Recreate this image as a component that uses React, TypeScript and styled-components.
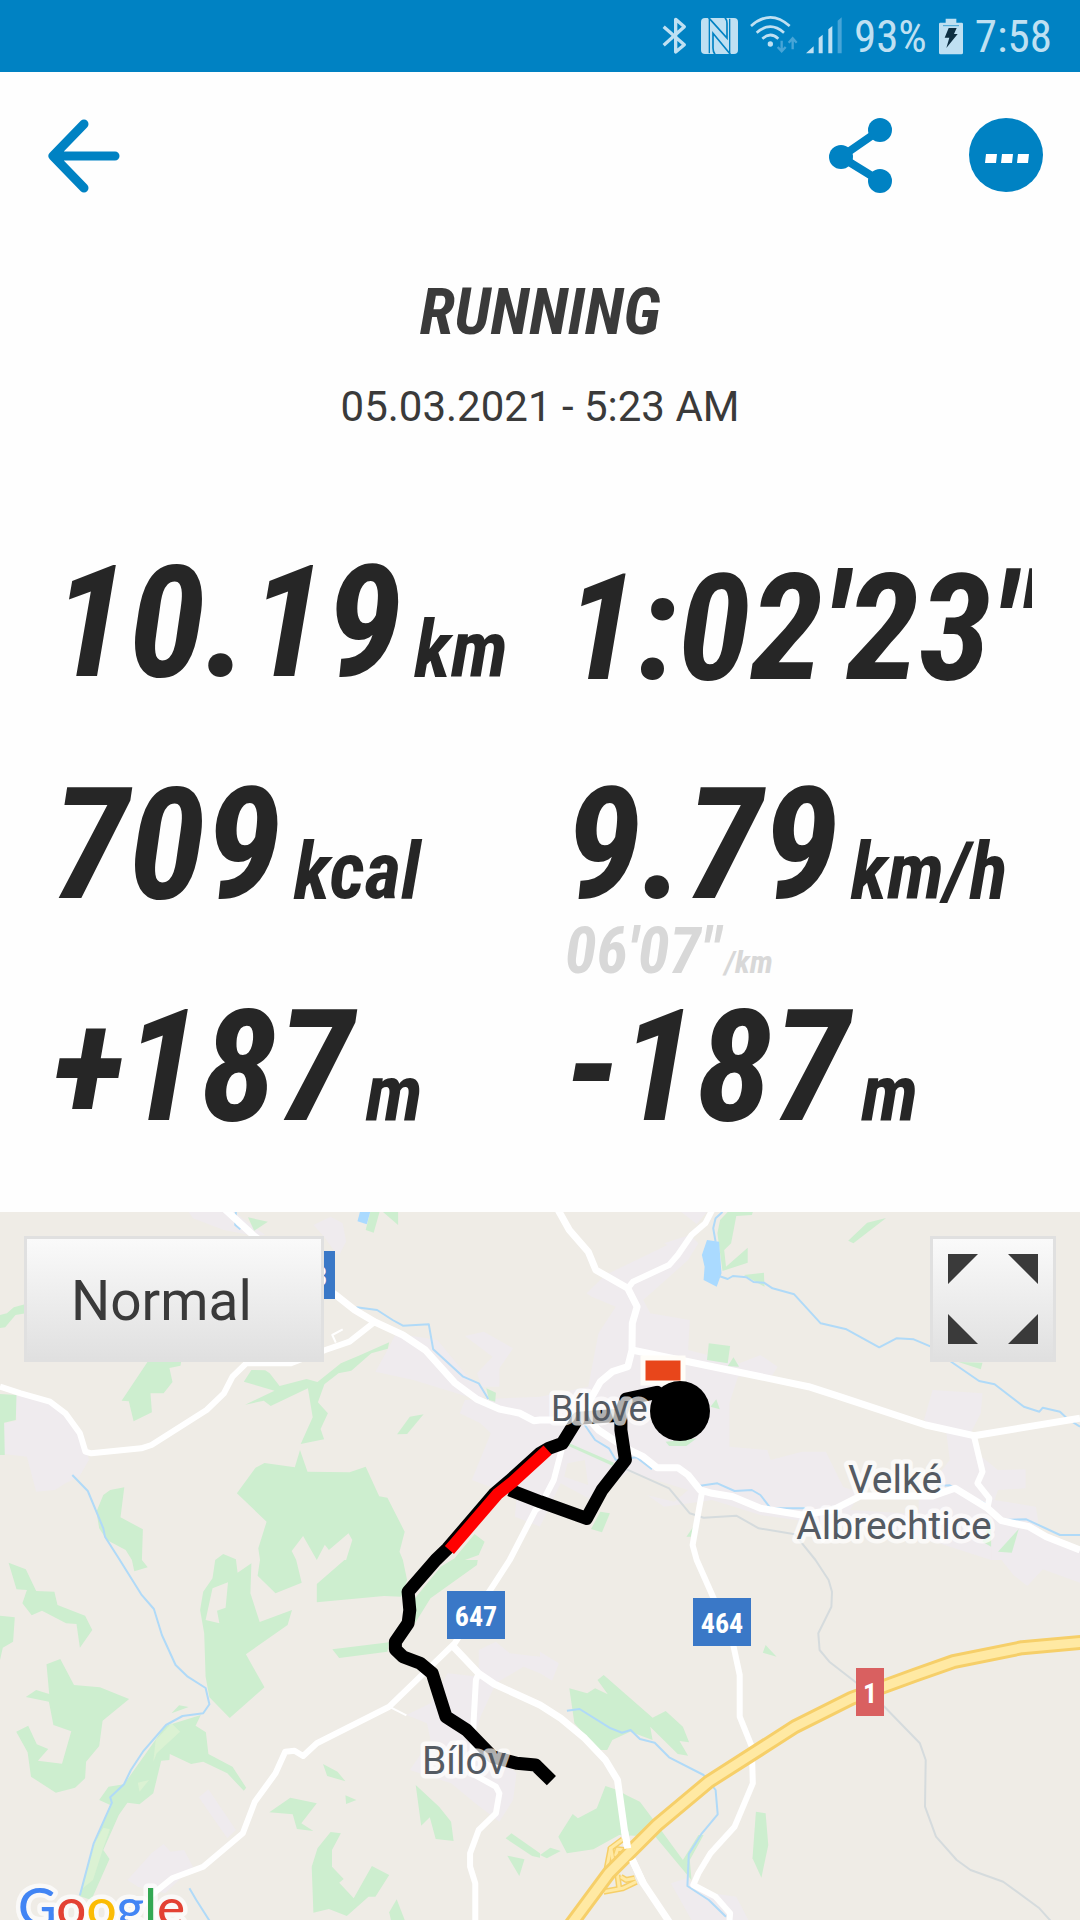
import React from "react";
import styled, { createGlobalStyle } from "styled-components";

const CONDENSED = `"Roboto Condensed", Roboto, "Liberation Sans Narrow", sans-serif`;
const REGULAR = `Roboto, "Noto Sans", sans-serif`;
const BLUE = "#0082c3";
const INK = "#262626";
const TEXT = "#3a3a3a";

const GlobalStyle = createGlobalStyle`
  *, *::before, *::after { box-sizing: border-box; }
  body { margin: 0; background: #fefefe; font-family: ${REGULAR}; color: ${TEXT}; }
`;

const Page = styled.main`
  display: flex;
  flex-direction: column;
  min-height: 100vh;
`;

const StatusBar = styled.div`
  display: flex;
  align-items: center;
  justify-content: flex-end;
  gap: 12px;
  height: 72px;
  padding: 0 28px;
  background: ${BLUE};
  color: #bfe0f2;
`;

const StatusText = styled.span`
  padding-top: 2px;
  font: 400 45px/70px ${CONDENSED};
`;

const StatusIcon = styled.svg`
  display: block;
  height: 40px;
  flex: none;
  overflow: visible;
`;

const Header = styled.header`
  display: flex;
  align-items: center;
  justify-content: space-between;
  height: 168px;
  padding: 0 36px 0 48px;
`;

const Actions = styled.div`
  display: flex;
  gap: 76px;
`;

const IconButton = styled.button`
  display: block;
  padding: 0;
  border: 0;
  background: none;
  color: ${BLUE};
  cursor: pointer;
  svg { display: block; }
`;

const Summary = styled.section`
  display: flex;
  flex-direction: column;
  align-items: center;
  gap: 28px;
  padding: 32px 48px 112px;
`;

const Title = styled.h1`
  margin: 0;
  font: italic 700 65px/80px ${CONDENSED};
`;

const When = styled.time`
  font-size: 42px;
  line-height: 54px;
`;

const Stats = styled.section`
  display: grid;
  grid-template-columns: 1fr 1fr;
  grid-auto-rows: 222px;
  column-gap: 46px;
  padding: 0 48px 0 52px;
  color: ${INK};
  font-family: ${CONDENSED};
  font-style: italic;
  font-weight: 700;
  white-space: nowrap;
`;

const Stat = styled.div<{ $clip?: boolean }>`
  min-width: 0;
  overflow: ${(p) => (p.$clip ? "hidden" : "visible")};
`;

const Value = styled.div<{ $long?: boolean }>`
  display: flex;
  align-items: baseline;
  gap: 12px;
  height: 152px;
  font-size: ${(p) => (p.$long ? 148 : 156)}px;
  line-height: ${(p) => (p.$long ? 166 : 154)}px;
`;

const Unit = styled.span`
  font-size: 79px;
  line-height: 80px;
`;

const Pace = styled.div`
  display: flex;
  align-items: baseline;
  gap: 4px;
  color: #d8d8d8;
  font-size: 64px;
  line-height: 64px;
`;

const PaceUnit = styled.span`
  font-size: 32px;
  line-height: 32px;
`;

const MapArea = styled.section`
  position: relative;
  flex: 1;
  min-height: 640px;
  overflow: hidden;
  background: #efece6;
`;

const MapCanvas = styled.svg`
  position: absolute;
  inset: 0;
  width: 100%;
  height: 100%;
`;

const MapControls = styled.div`
  position: relative;
  display: flex;
  justify-content: space-between;
  padding: 24px;
`;

const MapType = styled.select`
  appearance: none;
  width: 300px;
  height: 126px;
  padding: 4px 44px 0;
  border: 3px solid #e0e0e0;
  border-radius: 0;
  background: linear-gradient(#fafafa, #e0e0e0);
  color: ${TEXT};
  font: 400 55px/64px ${REGULAR};
`;

const Expand = styled.button`
  display: grid;
  place-items: center;
  width: 126px;
  height: 126px;
  padding: 0;
  border: 3px solid #e0e0e0;
  background: linear-gradient(#fafafa, #e0e0e0);
  color: ${TEXT};
  cursor: pointer;
`;

/* The map data comes in four tiles, each 1568 x 1080 units, covering 540 x 360 px. */
const TILES: Record<string, [number, number]> = {
  NW: [0, -12],
  NE: [540, -12],
  SW: [0, 348],
  SE: [540, 348],
};

function trace(data: string): string {
  let origin = TILES.NW;
  const points: string[] = [];
  for (const token of data.trim().split(/\s+/)) {
    if (TILES[token]) {
      origin = TILES[token];
    } else {
      const [x, y] = token.split(",").map(Number);
      points.push(`${(origin[0] + (x * 540) / 1568).toFixed(1)},${(origin[1] + y / 3).toFixed(1)}`);
    }
  }
  return points.join(" ");
}

const URBAN = [
  "NW 548,36 680,36 770,105 740,108 650,90 560,55",
  "NW 910,75 960,50 995,70 1005,125 985,165 975,160 941,110",
  "NW 45,585 130,600 200,650 240,700 258,780 230,830 190,850 160,870 105,875 78,770 12,762 12,670 48,662",
  "NW 1150,400 1270,420 1350,520 1400,565 1405,590 1390,600 1200,540 1090,515 1130,440",
  "NW 1350,408 1405,395 1490,445 1450,505 1450,560 1400,560 1385,520 1430,470",
  "NW 1350,600 1568,590 NE 140,560 170,400 220,320 150,290 135,280 190,225 370,135 360,130 435,105 460,130 430,180 300,300 320,340 435,360 430,450 580,490 640,465 690,500 675,525 575,530 550,610 550,740 660,750 670,780 760,755 830,755 880,860 930,880 900,930 1310,955 1310,1080 1100,1010 780,965 640,945 500,900 360,920 250,840 200,830 150,900 60,850 0,980 NW 1495,950 1500,890 1370,840 1425,700 1395,670 1335,640",
  "NE 410,36 485,36 455,72",
  "NE 1140,570 1285,580 1280,640 1250,700 1270,760 1330,810 1410,808 1410,865 1330,870 1320,900 1440,920 1450,990 1568,1040 1568,1080 1310,1080 1310,1040 1100,1000 1100,900 1190,780 1180,700 1115,660",
  "SW 577,712 605,688 685,810 660,835",
  "SW 370,960 440,880 475,852 495,875 535,870 560,920 480,1000 400,980",
  "SW 1180,465 1250,430 1300,340 1390,350 1390,270 1440,245 1480,280 1568,290 SE 0,275 55,310 35,362 0,340 SW 1520,320 1440,370 1395,470 1380,520 1500,640 1490,720 1450,785 1380,730 1310,670 1190,630 1250,540 1240,490",
  "SE 1340,0 1568,-10 1568,68 1460,28 1415,78 1375,45",
  "SE 380,970 425,955 450,975 500,1000 570,1010 605,1080 440,1080",
];

const CLEARINGS = [
  "NE 80,790 130,780 140,855 70,830",
  "NE 190,870 255,815 430,870 390,905 250,870",
];

const WOODS = [
  "NW 720,52 778,65 738,92",
  "NW 1075,36 1102,36 1085,98 1062,90",
  "NW 1112,36 1156,36 1156,75",
  "NW 0,345 20,340 40,322 75,312 75,340 45,345 15,382 0,384",
  "NW 432,480 526,486 524,497 492,504 501,546 475,580 437,580 441,637 388,664 374,604 353,602",
  "NW 708,545 730,510 770,511 783,520 812,558 890,537 922,546 990,490 1045,466 1130,427 1126,446 1078,460 1020,512 983,520 942,553 923,607 952,640 931,687 941,718 873,732 908,652 894,565 786,618 766,602 712,614 797,572",
  "NW 1153,703 1190,650 1230,643 1182,702",
  "NW 688,880 742,803 768,789 856,802 871,750 893,815 1015,817 1062,800 1101,889 1125,893 1175,995 1160,1055 1170,1080 SW 1182,60 1165,110 1115,108 920,127 920,72 1000,0 NW 1005,1080 1023,1020 1012,1000 955,1050 943,1034 920,1080 880,1008 847,1053 860,1080 SW 876,68 800,100 748,47 NW 755,1080 750,1045 774,965",
  "NW 300,885 320,870 361,862 350,952 415,988 412,1080 SW 429,22 390,34 NW 383,1080 365,1050 310,1020 288,985 280,935",
  "NW 1378,1002 1407,1025 1390,1065 1350,1080 SW 1387,0 1385,15 1250,115 1205,190 1205,115 1280,20 NW 1320,1075",
  "NW 0,582 48,585 46,660 12,668 14,765 0,765",
  "NW 625,1080 648,1062 685,1078 SW 690,38 730,10 727,100 754,186 848,150 835,195 714,283 768,382 667,474 608,412 597,350 593,220 581,150 590,95 617,55",
  "NW 1412,565 1440,578 1438,605 1420,600",
  "NE 523,60 545,36 618,36 615,45 570,48 555,130 535,150 540,200 603,143 603,188 530,213 515,100",
  "NE 592,225 650,218 652,260",
  "NE 895,122 950,68 1005,54 910,130",
  "NE 490,430 552,438 545,490 485,480",
  "NE 545,498 562,472 578,500",
  "NE 495,620 512,598 522,628",
  "NE 365,725 455,715 425,738 375,738",
  "NE 65,730 85,730 215,788 210,797",
  "NE 1215,486 1285,488 1280,508",
  "NE 175,935 203,940 180,997 148,987",
  "NE 425,1010 445,980 438,1010",
  "NE 1285,1025 1310,955 1310,1040",
  "NE 1330,1055 1390,987 1370,1058",
  "SW 25,8 75,28 105,93 158,95 167,135 247,167 268,210 232,263 222,192 192,190 122,152 92,166 65,130 78,90 48,88",
  "SW 0,167 43,172 38,245 8,263 0,300",
  "SW 135,313 175,297 215,375 290,382 375,417 298,482 288,558 250,605 247,655 218,683 162,698 90,650 80,577 47,515 82,497 107,553 140,567 110,602 180,611 207,514 155,495 142,425 75,411 105,390 143,402",
  "SW 498,460 520,436 548,441",
  "SW 288,720 315,680 360,673 480,498 583,465 568,497 598,517 605,582 675,620 715,683 708,692 660,640 590,605 555,612 493,582 492,600 468,602 445,700 405,733 370,728 345,765 300,870 318,897 265,1020 230,1008 275,850 320,735",
  "SW 965,268 1130,247 1125,275 985,294",
  "SW 938,612 980,635 1003,664 950,648",
  "SW 1003,706 1035,720 1005,732",
  "SW 782,757 843,713 920,730 875,790 910,813 862,807 850,763",
  "SW 1207,675 1275,740 1310,785 1317,843 1265,837 1248,772 1223,797",
  "SW 960,816 990,820 964,870 964,920 998,957 985,968 1027,1015 1080,918 1130,945 1090,1010 1070,1010 1007,1068 955,1047 910,1058 905,920 922,865",
  "SW 1130,1057 1152,1018 1175,1080 1135,1080",
  "SW 1468,835 1485,820 1568,880 1568,893 1545,888",
  "SW 1473,887 1523,898 1508,948",
  "SE 85,385 137,400 160,385 197,403 167,360 185,345 327,473 365,453 415,500 433,547 405,543 430,587 400,582 320,500 327,540 262,515 210,540 195,570 170,570 100,490",
  "SE 655,255 687,290 647,278",
  "SE 53,830 95,762 110,775 165,745 190,678 225,690 250,705 290,725 330,780 415,900 460,825 475,825 435,900 440,960 335,830 230,825 155,868 78,880",
  "SE 0,885 30,863 60,873 20,895",
  "SE 627,755 655,760 663,855 643,953 617,895",
];

const GLADES = ["SW 617,85 662,67 655,143 630,152 637,190 597,180"];

const PALE_WOODS = [
  "SW 498,490 523,515 455,580 445,605 452,540",
  "SW 300,803 319,808 298,870 270,960 240,985 275,850",
  "SW 400,668 433,660 405,695",
];

const LAKES = ["NW 1045,36 1075,36 1065,73 1038,64", "NE 485,120 520,125 527,220 513,260 475,240 478,200 470,165"];

const STREAMS = [
  "NW 685,36 683,75 698,88",
  "NW 1035,322 1095,330 1140,360 1170,377 1245,373 1258,448 1345,530 1390,550 1418,597",
  "NW 210,825 255,873 300,985 305,1010 348,1080 SW 410,103 447,147 470,225 510,315 545,350 597,384 608,433 590,460 530,468 482,495 415,575 380,630 360,673 320,712 325,728 272,850 232,1006",
  "NE 530,36 510,55 503,85 510,125",
  "NE 520,228 545,237 560,228 600,232 620,246 650,248 675,265 738,283 815,370 890,388 985,442 1035,415 1085,418 1135,440 1200,490 1275,543 1320,553 1405,620 1450,635 1460,623 1510,635 1530,655 1568,680",
  "NE 130,675 160,720 200,745 220,780 280,772 325,808",
  "NE 465,857 515,850 565,873 615,870 640,885 670,925 770,925",
  "NE 1150,858 1190,856 1300,915",
  "NE 1345,960 1412,958 1510,1005 1568,1005",
  "SW 550,985 570,1020 610,1085",
  "SE 78,452 115,447 205,505 238,518 263,510 290,537 333,548 375,592 475,645 510,690 516,763 470,820 432,882 428,978 490,1020 540,1070",
];

const RAILWAY =
  "NE 215,793 260,812 375,865 435,940 475,953 570,947 635,985 740,1003 800,1080 SE 838,60 848,95 846,140 808,220 812,270 840,305 915,365 1000,440 1103,550 1120,600 1118,740 1150,830 1210,900 1250,930 1345,965 1450,1045 1485,1085";

const ROADS = [
  "NW 650,25 740,110 975,285 1030,330 1090,367 1170,405 1235,450 1320,548 1385,598 1450,627 1510,640 1550,662 NE 0,660 135,660",
  "NE 50,25 85,90 140,155 162,210 255,265 282,320 268,370 267,450 255,500 210,515 175,545 140,610 135,650 170,690 250,745 300,770 340,803 400,803 430,825 465,870 500,880 560,890 640,925 760,945 850,930 930,888 1140,888 1205,865 1300,925 1340,962 1420,980 1470,1010 1568,1050",
  "NE 267,450 780,560 870,590 1120,675 1260,707 1568,655",
  "SW 1312,255 1390,340 1435,372 1568,435 SE 60,475 130,535 190,600 225,660 245,810 255,870 300,970 375,1085",
];

const LANES = [
  "NW 1085,368 1015,425 945,450 845,490 715,490 675,530 650,580 600,630 440,735 410,745 265,760 248,755 232,700 190,640 145,605 60,580 0,560",
  "NE 65,740 40,840 0,920 NW 1555,930 1480,1080 SW 1430,80 1320,250 1130,440 920,550 880,588 855,572 828,575 800,640 740,725 705,820 590,920 500,955 440,1005",
  "SW 1390,340 1382,360 1375,490 1370,640 1440,680 1450,700 1440,760 1390,810 1365,880 1365,920 1380,970 1380,1085",
  "NE 500,30 480,70 440,105 400,165 375,195 270,245 255,265",
  "NE 1260,707 1285,815 1270,850 1305,895 1300,920",
  "NE 470,878 443,1035 455,1080 SE 500,105 560,250 580,345 580,470 615,560 618,670 565,800 495,880 460,940 445,975 510,1010 552,1060 550,1085",
];

const PATHS = ["NW 975,428 965,405 995,388", "SW 1130,440 1180,466"];

const MOTORWAY =
  "SE 85,1100 200,940 340,795 490,665 680,540 740,500 905,415 1090,345 1200,305 1400,263 1575,247";

const RAMPS = [
  "SE 240,838 205,865 190,945",
  "SE 245,870 225,868 220,885 232,900",
  "SE 185,995 240,985 280,965",
  "SE 235,950 250,960 275,955",
  "SE 205,860 215,920",
  "SE 225,945 230,985",
];

const TRACK =
  "NE 400,620 340,577 250,597 235,640 235,690 248,780 180,870 135,955 NW 1568,905 1480,870";
const TRACK_OUT =
  "NE 240,645 110,655 65,730 25,745 NW 1568,760 1480,842 1435,882 1300,1045 1265,1080 SW 1185,95 1190,150 1185,190 1148,245 1148,268 1170,290 1220,310 1255,340 1295,470 1355,510 1430,590 1500,610 1555,615 SE 33,662";
const TRACK_FAST = "NE 22,750 NW 1490,845 1445,882 1305,1050";

const Label = styled.text<{ $small?: boolean }>`
  font: 400 ${(p) => (p.$small ? 36 : 39)}px ${REGULAR};
  fill: #545a62;
  stroke: rgba(255, 255, 255, 0.7);
  stroke-width: 9px;
  stroke-linejoin: round;
  paint-order: stroke;
`;

const ShieldText = styled.text`
  font: 700 28px ${CONDENSED};
  fill: #fff;
  text-anchor: middle;
`;

const Brand = styled.text`
  font: 500 53px Lato, ${REGULAR};
  stroke: rgba(255, 255, 255, 0.7);
  stroke-width: 9px;
  stroke-linejoin: round;
  paint-order: stroke;
`;

function Shield({ x, y, label, color = "#3a78c7" }: { x: number; y: number; label: string; color?: string }) {
  const width = label.length > 1 ? 58 : 28;
  return (
    <g>
      <rect x={x} y={y} width={width} height={48} fill={color} />
      <ShieldText x={x + width / 2} y={y + 35}>{label}</ShieldText>
    </g>
  );
}

function Lines({ data, color, width }: { data: string[]; color: string; width: number }) {
  return (
    <g fill="none" stroke={color} strokeWidth={width} strokeLinejoin="round">
      {data.map((d) => <polyline key={d} points={trace(d)} />)}
    </g>
  );
}

function Areas({ data, color }: { data: string[]; color: string }) {
  return (
    <g fill={color}>
      {data.map((d) => <polygon key={d} points={trace(d)} />)}
    </g>
  );
}

function RouteMap() {
  return (
    <MapCanvas viewBox="0 0 1080 708" preserveAspectRatio="xMidYMin slice" role="img" aria-label="Route map">
      <Areas data={URBAN} color="#efebee" />
      <Areas data={CLEARINGS} color="#efece6" />
      <Areas data={WOODS} color="#cdeecf" />
      <Areas data={PALE_WOODS} color="#dbf2d3" />
      <Areas data={GLADES} color="#efece6" />
      <Areas data={LAKES} color="#aadaff" />
      <Lines data={STREAMS} color="#b0daf8" width={2} />
      <Lines data={[RAILWAY]} color="#d5dbdd" width={2} />
      <Lines data={PATHS} color="#fff" width={2} />
      <Lines data={LANES} color="#fff" width={6} />
      <Lines data={ROADS} color="#fff" width={7} />
      <Lines data={RAMPS} color="#f6cf69" width={6} />
      <Lines data={RAMPS} color="#ffe9a3" width={3} />
      <Lines data={[MOTORWAY]} color="#f6cf69" width={15} />
      <Lines data={[MOTORWAY]} color="#ffe9a3" width={9} />
      <Lines data={["SE 245,810 255,865", "SE 268,900 300,970"]} color="#fff" width={7} />
      <Lines data={[TRACK, TRACK_OUT]} color="#000" width={13} />
      <Lines data={[TRACK_FAST]} color="#f00" width={12} />

      <rect x={643} y={146} width={40} height={25} fill="#e8461b" stroke="#fffdf8" strokeWidth={5} />
      <Label $small x={551} y={209}>Bílove</Label>
      <circle cx={680} cy={199} r={30} />
      <Label x={895} y={281} textAnchor="middle">Velké</Label>
      <Label x={894} y={327} textAnchor="middle">Albrechtice</Label>
      <Label x={422} y={562}>Bílov</Label>

      <Shield x={277} y={39} label="463" />
      <Shield x={447} y={379} label="647" />
      <Shield x={693} y={386} label="464" />
      <Shield x={856} y={456} label="1" color="#d96060" />

      <Brand x={18} y={714}>
        <tspan fill="#4285f4">G</tspan>
        <tspan fill="#e34133">o</tspan>
        <tspan fill="#fbbc05">o</tspan>
        <tspan fill="#4285f4">g</tspan>
        <tspan fill="#34a853">l</tspan>
        <tspan fill="#e34133">e</tspan>
      </Brand>
    </MapCanvas>
  );
}

function StatusIcons() {
  return (
    <>
      <StatusIcon viewBox="0 0 78 120" width="26" fill="none" stroke="currentColor" strokeWidth="10" aria-label="Bluetooth">
        <path d="M2 32 L64 86 L38 108 V10 L64 32 L2 88" strokeLinejoin="round" />
      </StatusIcon>
      <StatusIcon viewBox="0 0 111 120" width="37" aria-label="NFC">
        <rect y="6" width="111" height="108" rx="12" fill="currentColor" />
        <path d="M22 4 L78 66 V22 Q78 12 72 5" fill="none" stroke={BLUE} strokeWidth="5" />
        <path d="M88 115 L36 52 V96 Q36 108 42 115" fill="none" stroke={BLUE} strokeWidth="5" />
        <path d="M25 8 V112 M86 8 V112" fill="none" stroke={BLUE} strokeWidth="4" />
      </StatusIcon>
      <StatusIcon viewBox="0 0 132 120" width="44" fill="none" stroke="currentColor" strokeWidth="8" aria-label="Wi-Fi">
        <path d="M3 30 Q61 -22 119 30 M20 50 Q61 14 102 50 M37 68 Q61 46 85 68" />
        <circle cx="61" cy="84" r="8" fill="currentColor" stroke="none" />
        <path d="M95 74 V104 M83 93 L95 106 L107 93 M128 100 V68 M116 80 L128 67 L140 80" stroke="#48a5d7" strokeWidth="7" />
      </StatusIcon>
      <StatusIcon viewBox="0 0 108 120" width="36" fill="currentColor" aria-label="Signal">
        <path d="M0 112 L23 91 V112Z M38 112 V66 L50 56 V112Z M67 112 V40 L79 30 V112Z" />
        <path d="M95 112 V14 L107 4 V112Z" fill="#48a5d7" />
      </StatusIcon>
      <StatusText>93%</StatusText>
      <StatusIcon viewBox="0 0 72 120" width="24" fill="currentColor" aria-label="Battery charging">
        <path d="M20 8 H52 V20 H68 Q72 20 72 24 V110 Q72 115 67 115 H5 Q0 115 0 110 V24 Q0 20 4 20 H20Z" />
        <path d="M12 29 H60" stroke={BLUE} strokeWidth="2" />
        <path d="M29 36 H53 L45 54 H56 L22 96 L31 65 H17Z" fill="#0e2f42" />
      </StatusIcon>
      <StatusText>7:58</StatusText>
    </>
  );
}

interface StatItem {
  value: string;
  unit?: string;
  long?: boolean;
  pace?: [string, string];
}

const STATS: StatItem[] = [
  { value: "10.19", unit: "km" },
  { value: "1:02'23\"", long: true },
  { value: "709", unit: "kcal" },
  { value: "9.79", unit: "km/h", pace: ["06'07\"", "/km"] },
  { value: "+187", unit: "m" },
  { value: "-187", unit: "m" },
];

export default function App() {
  return (
    <Page>
      <GlobalStyle />
      <StatusBar>
        <StatusIcons />
      </StatusBar>

      <Header>
        <IconButton aria-label="Back">
          <svg width="72" height="74" viewBox="0 0 72 74" fill="none" stroke="currentColor" strokeWidth="9" strokeLinecap="round" strokeLinejoin="round">
            <path d="M36 5 L5 37 L36 69 M5 37 H67" />
          </svg>
        </IconButton>
        <Actions>
          <IconButton aria-label="Share">
            <svg width="64" height="76" viewBox="0 0 64 76" fill="currentColor">
              <path d="M51 12 L12 39 L51 63" fill="none" stroke="currentColor" strokeWidth="8" />
              <circle cx="51" cy="12" r="12" />
              <circle cx="12" cy="39" r="12" />
              <circle cx="51" cy="63" r="12" />
            </svg>
          </IconButton>
          <IconButton aria-label="More options">
            <svg width="75" height="76" viewBox="0 0 75 76">
              <circle cx="37" cy="37" r="37" fill="currentColor" />
              <path d="M17 36 h11 l-1 9 h-11z M33 36 h11 l-1 9 h-11z M49 36 h11 l-1 9 h-11z" fill="#fff" />
            </svg>
          </IconButton>
        </Actions>
      </Header>

      <Summary>
        <Title>RUNNING</Title>
        <When dateTime="2021-03-05T05:23">05.03.2021 - 5:23 AM</When>
      </Summary>

      <Stats>
        {STATS.map((s) => (
          <Stat key={s.value} $clip={s.long}>
            <Value $long={s.long}>
              <span>{s.value}</span>
              {s.unit && <Unit>{s.unit}</Unit>}
            </Value>
            {s.pace && (
              <Pace>
                <span>{s.pace[0]}</span>
                <PaceUnit>{s.pace[1]}</PaceUnit>
              </Pace>
            )}
          </Stat>
        ))}
      </Stats>

      <MapArea>
        <RouteMap />
        <MapControls>
          <MapType aria-label="Map type" defaultValue="normal">
            <option value="normal">Normal</option>
          </MapType>
          <Expand aria-label="Full screen">
            <svg width="90" height="90" viewBox="0 0 90 90" fill="currentColor">
              <path d="M0 0 H30 L0 30Z M90 0 V30 L60 0Z M0 90 V60 L30 90Z M90 90 H60 L90 60Z" />
            </svg>
          </Expand>
        </MapControls>
      </MapArea>
    </Page>
  );
}
